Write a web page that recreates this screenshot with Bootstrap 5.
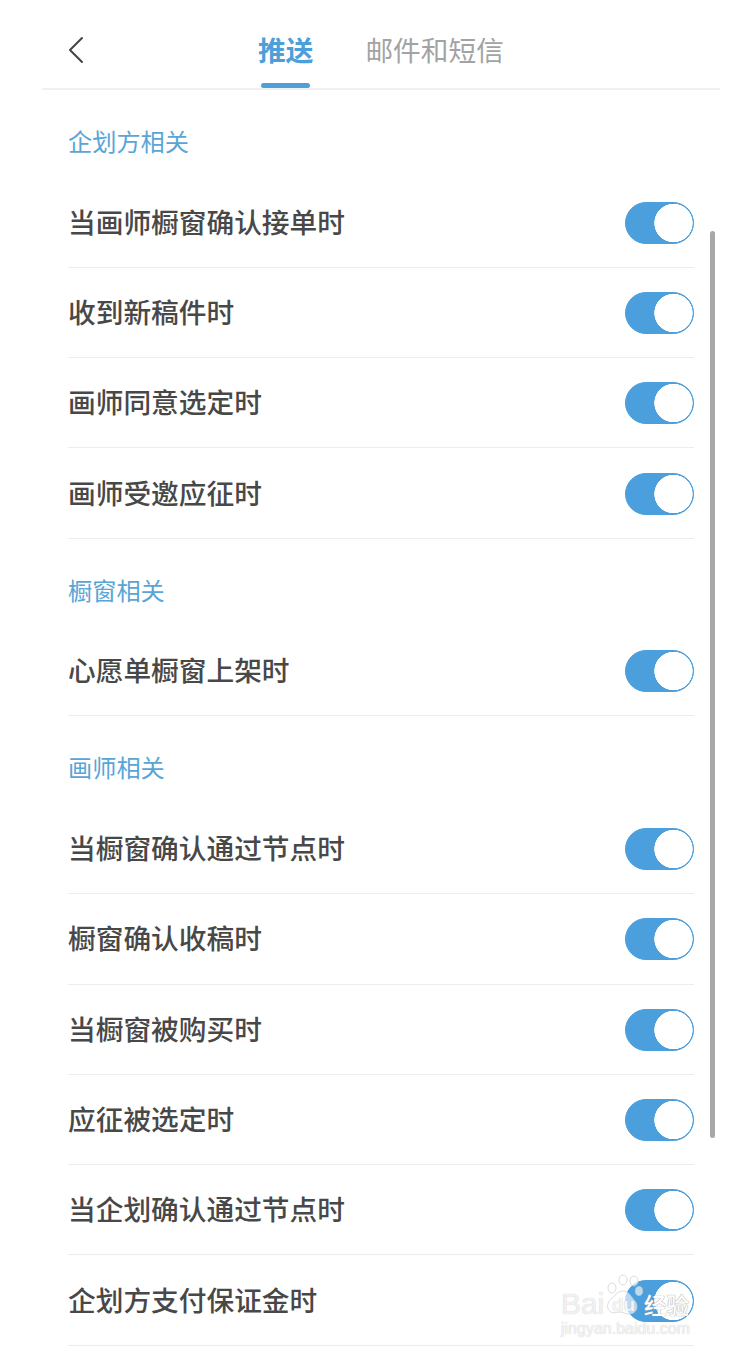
<!DOCTYPE html>
<html lang="zh-CN">
<head>
<meta charset="utf-8">
<title>推送</title>
<link href="https://cdn.jsdelivr.net/npm/bootstrap@5.3.0/dist/css/bootstrap.min.css" rel="stylesheet">
<style>
html,body{height:1354px;overflow:hidden;background:#fff}
body{font-family:"Noto Sans CJK SC","Liberation Sans",sans-serif}
.screen{height:1354px;overflow:hidden}
.topbar{height:90px;margin:0 12px 0 42px;padding-left:25px;border-bottom:2px solid #f0f0f0}
.backlink{width:18px;height:28px;margin-top:36px;color:#444;line-height:0}
.tabset{margin-left:173px;gap:52px}
.tabset .nav-link{padding:0;font-size:27.7px;line-height:40px;margin-top:29px;color:#a3a3a3;height:59px;background:none;border:0;border-radius:0;position:relative}
.tabset .nav-link.active{color:#4c9fd8;font-weight:700;background:none}
.tabset .nav-link.active::after{content:"";position:absolute;left:3px;bottom:0;height:5px;border-radius:3px;background:#4f9fd8;width:49px}
.body-pane{padding:0 38px 0 68px}
.sect{height:87.5px;padding-top:33px;font-size:24.2px;line-height:36px;color:#58a5d6;font-weight:400}
.rowlist{--bs-list-group-bg:transparent;--bs-list-group-border-width:0}
.rowlist .list-group-item{height:90.3px;padding:0 0 3px;border:0;border-bottom:1px solid #ececec;border-radius:0;font-size:27.7px;line-height:40px;font-weight:500;color:#484848}
.form-switch.swtwrap{padding:0;margin:4px 0 0;min-height:0;line-height:0}
.form-switch .form-check-input.swt{width:69px;height:42px;margin:0;float:none;border:1.5px solid #4b9fdd;border-radius:21px;background-color:#4b9fdd;background-image:radial-gradient(circle 19.5px at calc(100% - 19.5px) 50%,#fff 97%,transparent 100%);background-position:0 0;background-size:auto;box-shadow:none}
.overbar{position:absolute;left:710px;top:231px;width:5px;height:907px;border-radius:3px;background:#a8a8a8}
.stamp{position:absolute;left:558px;top:1272px;width:140px;height:70px;color:rgba(255,255,255,.8);font-family:"Liberation Sans",sans-serif;pointer-events:none;text-shadow:0 0 1px #bbb}
.stamp-paw{position:absolute;left:48px;top:2px}
.stamp-bai{position:absolute;left:3px;top:15px;font-size:30px;line-height:34px}
.stamp-du{position:absolute;left:54px;top:23px;font-size:19px;line-height:20px;font-weight:700;color:rgba(255,255,255,.85)}
.stamp-cn{position:absolute;left:86px;top:17px;font-family:"Noto Sans CJK SC",sans-serif;font-size:22.5px;line-height:30px;font-weight:500;color:#fff;text-shadow:0 0 1px #999,0 0 1px #aaa}
.stamp-url{position:absolute;left:3px;top:47px;font-size:16px;line-height:20px;white-space:nowrap}
</style>
</head>
<body>
<div class="screen position-relative">
  <header class="topbar d-flex align-items-start">
    <a class="backlink d-block" href="#" aria-label="返回">
      <svg width="18" height="28" viewBox="0 0 18 28" fill="none" stroke="currentColor" stroke-width="2" stroke-linecap="round" stroke-linejoin="round"><path d="M15 2 3 14l12 12"/></svg>
    </a>
    <nav class="nav tabset">
      <a class="nav-link active" href="#">推送</a>
      <a class="nav-link" href="#">邮件和短信</a>
    </nav>
  </header>
  <main class="body-pane">
    <div class="sect">企划方相关</div>
    <div class="list-group rowlist">
      <div class="list-group-item d-flex justify-content-between align-items-center">当画师橱窗确认接单时<div class="form-check form-switch swtwrap"><input class="form-check-input swt" type="checkbox" role="switch" checked aria-label="当画师橱窗确认接单时"></div></div>
      <div class="list-group-item d-flex justify-content-between align-items-center">收到新稿件时<div class="form-check form-switch swtwrap"><input class="form-check-input swt" type="checkbox" role="switch" checked aria-label="收到新稿件时"></div></div>
      <div class="list-group-item d-flex justify-content-between align-items-center">画师同意选定时<div class="form-check form-switch swtwrap"><input class="form-check-input swt" type="checkbox" role="switch" checked aria-label="画师同意选定时"></div></div>
      <div class="list-group-item d-flex justify-content-between align-items-center">画师受邀应征时<div class="form-check form-switch swtwrap"><input class="form-check-input swt" type="checkbox" role="switch" checked aria-label="画师受邀应征时"></div></div>
    </div>
    <div class="sect">橱窗相关</div>
    <div class="list-group rowlist">
      <div class="list-group-item d-flex justify-content-between align-items-center">心愿单橱窗上架时<div class="form-check form-switch swtwrap"><input class="form-check-input swt" type="checkbox" role="switch" checked aria-label="心愿单橱窗上架时"></div></div>
    </div>
    <div class="sect">画师相关</div>
    <div class="list-group rowlist">
      <div class="list-group-item d-flex justify-content-between align-items-center">当橱窗确认通过节点时<div class="form-check form-switch swtwrap"><input class="form-check-input swt" type="checkbox" role="switch" checked aria-label="当橱窗确认通过节点时"></div></div>
      <div class="list-group-item d-flex justify-content-between align-items-center">橱窗确认收稿时<div class="form-check form-switch swtwrap"><input class="form-check-input swt" type="checkbox" role="switch" checked aria-label="橱窗确认收稿时"></div></div>
      <div class="list-group-item d-flex justify-content-between align-items-center">当橱窗被购买时<div class="form-check form-switch swtwrap"><input class="form-check-input swt" type="checkbox" role="switch" checked aria-label="当橱窗被购买时"></div></div>
      <div class="list-group-item d-flex justify-content-between align-items-center">应征被选定时<div class="form-check form-switch swtwrap"><input class="form-check-input swt" type="checkbox" role="switch" checked aria-label="应征被选定时"></div></div>
      <div class="list-group-item d-flex justify-content-between align-items-center">当企划确认通过节点时<div class="form-check form-switch swtwrap"><input class="form-check-input swt" type="checkbox" role="switch" checked aria-label="当企划确认通过节点时"></div></div>
      <div class="list-group-item d-flex justify-content-between align-items-center">企划方支付保证金时<div class="form-check form-switch swtwrap"><input class="form-check-input swt" type="checkbox" role="switch" checked aria-label="企划方支付保证金时"></div></div>
    </div>
  </main>
  <div class="overbar"></div>
  <div class="stamp">
    <svg class="stamp-paw" width="46" height="46" viewBox="0 0 46 46" fill="rgba(255,255,255,.62)" stroke="#ccc" stroke-width=".7"><ellipse cx="6" cy="14" rx="4" ry="5"/><ellipse cx="17" cy="6" rx="4" ry="5"/><ellipse cx="28" cy="7" rx="4" ry="5"/><ellipse cx="33" cy="17" rx="3.6" ry="4.5"/><path d="M17 17c6 0 8 6 12 10 4 5 2 13-6 13-4 0-6-2-9-2-4 0-6 2-9 0-5-3-4-9 0-13 4-3 6-8 12-8z"/></svg>
    <span class="stamp-bai">Bai</span>
    <span class="stamp-du">du</span>
    <span class="stamp-cn">经验</span>
    <span class="stamp-url">jingyan.baidu.com</span>
  </div>
</div>
<script src="https://cdn.jsdelivr.net/npm/bootstrap@5.3.0/dist/js/bootstrap.bundle.min.js"></script>
</body>
</html>
